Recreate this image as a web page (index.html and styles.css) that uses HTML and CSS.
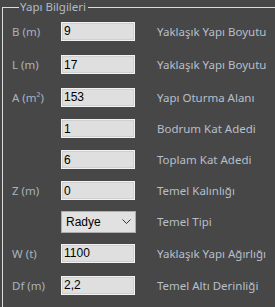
FILE: index.html
```html
<!DOCTYPE html>
<html>
<head>
    <meta charset="UTF-8">
    <title>Yapı Bilgileri</title>
    <link rel="stylesheet" href="styles.css">
</head>
<body>
    <fieldset class="group">
        <legend>Yapı Bilgileri</legend>
        <div class="rows">
            <span class="lbl">B (m)</span>
            <input class="box" type="text" value="9">
            <span class="desc">Yaklaşık Yapı Boyutu</span>

            <span class="lbl">L (m)</span>
            <input class="box" type="text" value="17">
            <span class="desc">Yaklaşık Yapı Boyutu</span>

            <span class="lbl">A (m²)</span>
            <input class="box" type="text" value="153">
            <span class="desc">Yapı Oturma Alanı</span>

            <span class="lbl"></span>
            <input class="box" type="text" value="1">
            <span class="desc">Bodrum Kat Adedi</span>

            <span class="lbl"></span>
            <input class="box" type="text" value="6">
            <span class="desc">Toplam Kat Adedi</span>

            <span class="lbl">Z (m)</span>
            <input class="box" type="text" value="0">
            <span class="desc">Temel Kalınlığı</span>

            <span class="lbl"></span>
            <div class="combo">
                <span>Radye</span>
                <svg width="9" height="6" viewBox="0 0 9 6"><path d="M0.5 0.5 L4.5 4.5 L8.5 0.5" fill="none" stroke="#333" stroke-width="1"/></svg>
            </div>
            <span class="desc">Temel Tipi</span>

            <span class="lbl">W (t)</span>
            <input class="box" type="text" value="1100">
            <span class="desc">Yaklaşık Yapı Ağırlığı</span>

            <span class="lbl">Df (m)</span>
            <input class="box" type="text" value="2,2">
            <span class="desc">Temel Altı Derinliği</span>
        </div>
    </fieldset>
</body>
</html>
```

FILE: styles.css
```css
html, body {
    margin: 0;
    height: 100%;
    overflow: hidden;
    background-color: #474747;
}

body {
    font-family: "Noto Sans", "DejaVu Sans", sans-serif;
    font-size: 11.5px;
}

.group {
    box-sizing: border-box;
    margin: 0 0 0 2px;
    width: calc(100% - 2px);
    height: 100%;
    padding: 0 0 0 9px;

    border: 1px solid #dcdcdc;
    border-right: none;
    border-bottom: none;
}

.group > legend {
    margin-left: 7px;
    padding: 0 2px 0 1px;
    color: #b2bac4;
    line-height: 14px;
}

.rows {
    display: grid;
    grid-template-columns: 49px 74px auto;
    grid-template-rows: 34px 33px 32px 31px 31px 31px 31px 32px 32px;
    align-items: center;
}

.lbl {
    color: #a9b3bf;
}

.desc {
    margin-left: 22px;
    color: #b7bfca;
    white-space: nowrap;
}

.box {
    box-sizing: border-box;
    width: 74px;
    height: 19px;
    margin: 0;
    padding: 0 0 0 2px;

    font-family: "Liberation Sans", sans-serif;
    font-size: 12px;
    color: #000;

    background-color: #dfdfdf;
    border: 1px solid #f2f2f2;
    box-shadow: inset 0 0 0 1px #cfcfcf;
    outline: none;
}

.combo {
    box-sizing: border-box;
    width: 75px;
    height: 22px;
    display: flex;
    align-items: center;
    justify-content: space-between;
    padding: 0 4px 0 4px;

    font-family: "Liberation Sans", sans-serif;
    font-size: 12px;
    color: #000;

    background-color: #e1e1e1;
    border: 1px solid #adadad;
}
```
